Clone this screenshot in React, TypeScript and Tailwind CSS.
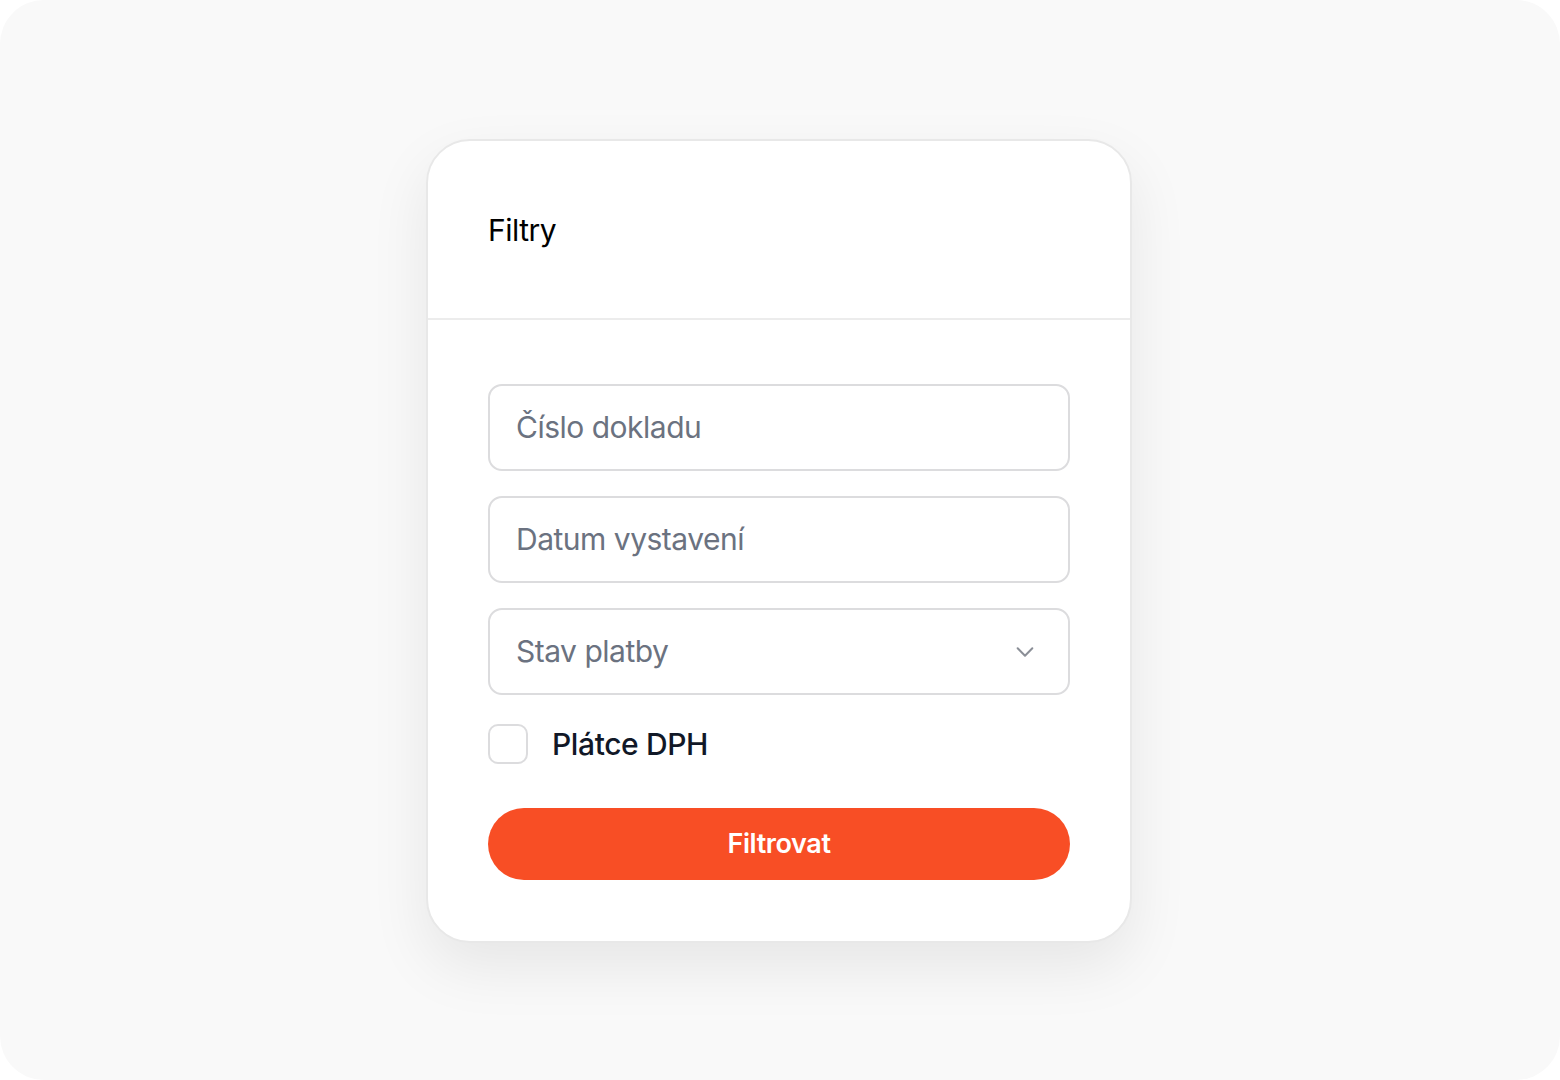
import React from "react";

export default function App() {
  return (
    <div className="w-[1560px] h-[1080px] bg-white" style={{ fontFamily: "Inter, 'Noto Sans', sans-serif" }}>
      <div className="w-full h-full rounded-[44px] bg-[#f9f9f9] flex items-center justify-center pr-[2px] pt-[2px]">
        <div className="w-[706px] bg-white border-2 border-[#e8e8e8] rounded-[44px] shadow-[0_24px_60px_rgba(0,0,0,0.08)] overflow-hidden">
          <div className="h-[179px] px-[60px] flex items-center border-b-2 border-[#ececec]">
            <h2 className="text-[30px] leading-none font-normal text-black tracking-[-0.5px]">Filtry</h2>
          </div>
          <div className="px-[60px] pt-[64px] pb-[61px] flex flex-col">
            <div className="h-[87px] border-2 border-[#dcdcde] rounded-[14px] px-[26px] flex items-center">
              <span className="text-[30px] text-[#6b7280] tracking-[-0.5px]">Číslo dokladu</span>
            </div>
            <div className="mt-[25px] h-[87px] border-2 border-[#dcdcde] rounded-[14px] px-[26px] flex items-center">
              <span className="text-[30px] text-[#6b7280] tracking-[-0.5px]">Datum vystavení</span>
            </div>
            <div className="mt-[25px] h-[87px] border-2 border-[#dcdcde] rounded-[14px] pl-[26px] pr-[32px] flex items-center justify-between">
              <span className="text-[30px] text-[#6b7280] tracking-[-0.5px]">Stav platby</span>
              <svg width="22" height="22" viewBox="0 0 24 24" fill="none" stroke="#8b8f97" strokeWidth="2.2" strokeLinecap="round" strokeLinejoin="round">
                <path d="M4 8l8 8 8-8" />
              </svg>
            </div>
            <div className="mt-[29px] h-[40px] flex items-center gap-[24px]">
              <div className="w-[40px] h-[40px] border-2 border-[#dcdcde] rounded-[10px]" />
              <span className="text-[30px] leading-none font-medium text-[#111827] tracking-[-0.4px]">Plátce DPH</span>
            </div>
            <button className="mt-[44px] h-[72px] w-full rounded-full bg-[#f84e25] text-white text-[27px] font-semibold tracking-[-0.4px]">
              Filtrovat
            </button>
          </div>
        </div>
      </div>
    </div>
  );
}
